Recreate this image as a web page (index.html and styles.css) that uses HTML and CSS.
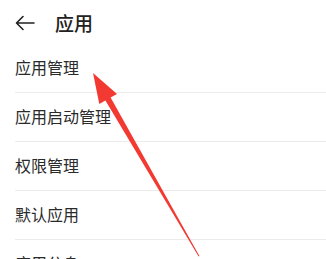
FILE: index.html
```html
<!DOCTYPE html>
<html lang="zh">
<head>
<meta charset="utf-8">
<link rel="stylesheet" href="styles.css">
</head>
<body>
<div class="page">
  <header class="header">
    <svg class="back" width="20" height="16" viewBox="0 0 20 16">
      <path d="M19 8H2M8 1.5L1.5 8L8 14.5" fill="none" stroke="#222" stroke-width="1.6" stroke-linecap="round" stroke-linejoin="round"/>
    </svg>
    <span class="title">应用</span>
  </header>
  <ul class="list">
    <li class="item">应用管理</li>
    <li class="item">应用启动管理</li>
    <li class="item">权限管理</li>
    <li class="item">默认应用</li>
    <li class="item">应用分身</li>
  </ul>
  <svg class="pointer" width="326" height="259" viewBox="0 0 326 259">
    <polygon points="93,73 117,94 110.6,97.5 199.4,256 198.6,256.4 105.4,100.5 99.3,104" fill="#f23a32"/>
  </svg>
</div>
</body>
</html>
```
FILE: styles.css
```css
* { box-sizing: border-box; }
html, body { margin: 0; padding: 0; background: #fff; }
body {
  font-family: "Noto Sans CJK SC", "Noto Sans", sans-serif;
  color: #222;
  width: 326px;
  height: 259px;
  overflow: hidden;
}
.page { position: relative; width: 326px; height: 259px; overflow: hidden; }
.header {
  height: 44px;
  display: flex;
  align-items: center;
  padding-left: 15px;
}
.back { display: block; margin-top: 2px; }
.title {
  margin-left: 20px;
  font-size: 19px;
  font-weight: 500;
  line-height: 1;
  margin-top: 1px;
}
.list { list-style: none; margin: 0; padding: 0 0 0 15px; }
.item {
  height: 49px;
  display: flex;
  align-items: center;
  font-size: 16px;
  color: #2a2a2a;
  border-bottom: 1px solid #ececec;
  padding-bottom: 2px;
}
.pointer { position: absolute; left: 0; top: 0; pointer-events: none; }
```
